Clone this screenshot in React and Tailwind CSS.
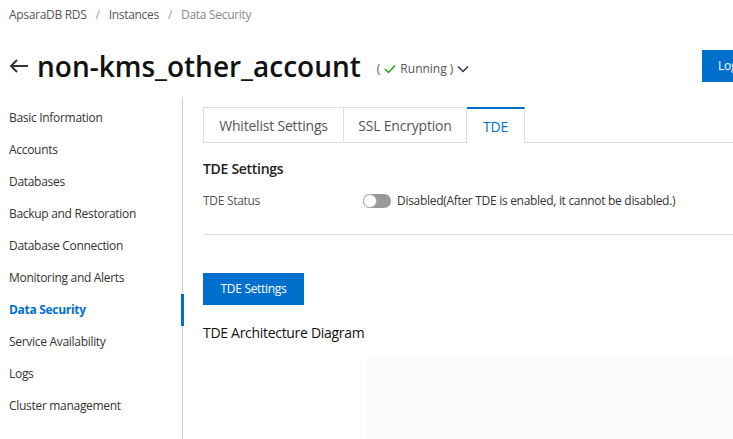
const FONT = { fontFamily: '"Open Sans", "Liberation Sans", Arial, sans-serif' };

const menu = [
  "Basic Information",
  "Accounts",
  "Databases",
  "Backup and Restoration",
  "Database Connection",
  "Monitoring and Alerts",
  "Data Security",
  "Service Availability",
  "Logs",
  "Cluster management",
];

export default function App() {
  return (
    <div className="w-[733px] h-[439px] overflow-hidden bg-white text-[#333] tracking-[-0.3px]" style={FONT}>
      {/* Breadcrumb */}
      <div className="h-[29px] pl-[9px] pt-[1px] flex items-center gap-[9px] text-[12px] text-[#666]">
        <span className="text-[#555]">ApsaraDB RDS</span>
        <span className="text-[#999]">/</span>
        <span className="text-[#555]">Instances</span>
        <span className="text-[#999]">/</span>
        <span className="text-[#888]">Data Security</span>
      </div>

      {/* Title row */}
      <div className="h-[68px] flex items-center pl-[9px] pt-[6px]">
        <svg width="20" height="14" viewBox="0 0 20 14" className="mr-[8px]">
          <path d="M19 7H2M8 1L2 7l6 6" fill="none" stroke="#333" strokeWidth="2" />
        </svg>
        <h1 className="text-[28px] font-semibold text-[#111] tracking-normal leading-none">non-kms_other_account</h1>
        <div className="ml-[16px] mt-[6px] flex items-center text-[12px] text-[#555] tracking-normal">
          <span>(</span>
          <svg width="12" height="10" viewBox="0 0 12 10" className="mx-[4px]">
            <path d="M1 5l3.5 3.5L11 1.5" fill="none" stroke="#1ea51e" strokeWidth="1.5" />
          </svg>
          <span>Running )</span>
          <svg width="12" height="8" viewBox="0 0 12 8" className="ml-[4px]">
            <path d="M1 1.5l5 5 5-5" fill="none" stroke="#333" strokeWidth="1.5" />
          </svg>
        </div>
        <div className="ml-auto w-[31px] h-[32px] bg-[#0070cc] text-white text-[12px] flex items-center pl-[16px] overflow-hidden whitespace-nowrap">
          Log
        </div>
      </div>

      <div className="flex">
        {/* Sidebar */}
        <div className="w-[183px] h-[342px] border-r border-[#ccc] relative shrink-0">
          <ul className="pt-[5px]">
            {menu.map((m) => (
              <li
                key={m}
                className={
                  m === "Data Security"
                    ? "h-[32px] pl-[9px] flex items-center text-[12px] font-bold text-[#0070cc] relative"
                    : "h-[32px] pl-[9px] flex items-center text-[12px] text-[#333]"
                }
              >
                {m}
                {m === "Data Security" && (
                  <span className="absolute right-[-2px] top-0 w-[3px] h-[32px] bg-[#0070cc]" />
                )}
              </li>
            ))}
          </ul>
        </div>

        {/* Content */}
        <div className="flex-1 pl-[20px] pt-[10px]">
          {/* Tabs */}
          <div className="flex h-[36px] border-b border-[#ddd] tracking-[-0.2px]">
            <div className="w-[141px] border border-[#ddd] border-b-0 flex items-center justify-center text-[14px] text-[#555]">
              Whitelist Settings
            </div>
            <div className="w-[123px] border-t border-r border-[#ddd] flex items-center justify-center text-[14px] text-[#555]">
              SSL Encryption
            </div>
            <div className="w-[58px] border-t-2 border-t-[#0070cc] border-r border-r-[#ddd] bg-white mb-[-1px] flex items-center justify-center text-[14px] text-[#0070cc]">
              TDE
            </div>
          </div>

          <div className="mt-[15px] text-[14px] font-semibold text-[#222]">TDE Settings</div>

          <div className="mt-[14px] flex items-center h-[16px] text-[12px]">
            <span className="w-[160px] text-[#555]">TDE Status</span>
            <span className="w-[28px] h-[14px] rounded-full bg-[#999] relative">
              <span className="absolute left-0 top-0 w-[14px] h-[14px] rounded-full bg-white border border-[#aaa]" />
            </span>
            <span className="ml-[6px] text-[#333]">Disabled(After TDE is enabled, it cannot be disabled.)</span>
          </div>

          <div className="mt-[25px] border-t border-[#ddd]" />

          <button className="mt-[38px] w-[101px] h-[32px] bg-[#0070cc] text-white text-[12px] block">
            TDE Settings
          </button>

          <div className="mt-[17px] text-[14px] font-medium text-[#111]">TDE Architecture Diagram</div>

          <div className="mt-[12px] ml-[164px] h-[90px] bg-[#fafafa]" />
        </div>
      </div>
    </div>
  );
}
